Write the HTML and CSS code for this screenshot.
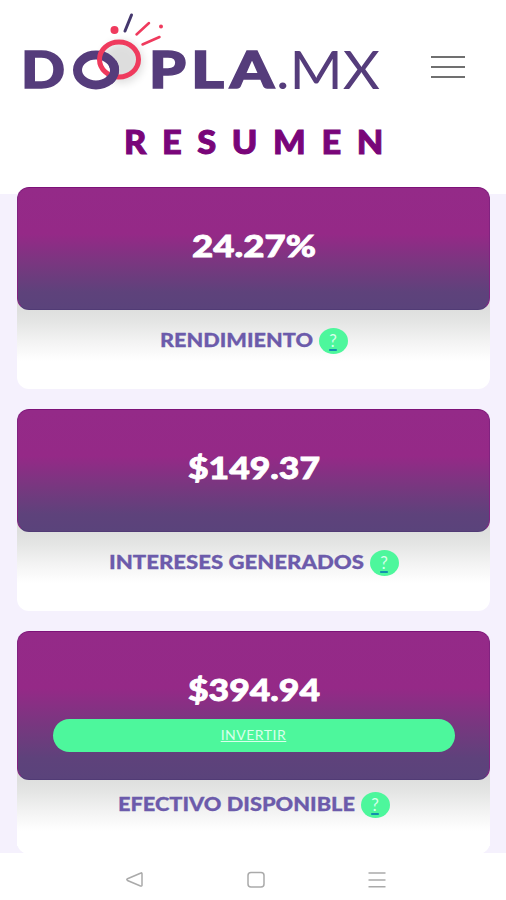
FILE: index.html
```
<!DOCTYPE html>
<html lang="es">
<head>
    <meta charset="UTF-8">
    <meta name="viewport" content="width=device-width, initial-scale=1.0">
    <title>DOOPLA.MX - Resumen</title>
    <link rel="stylesheet" href="styles.css">
</head>
<body>

    <!-- Header -->
    <header>
        <svg class="logo" width="390" height="110" viewBox="0 0 390 110" role="img" aria-label="DOOPLA.MX">
            <defs>
                <filter id="glow" x="-40%" y="-40%" width="180%" height="180%"><feGaussianBlur stdDeviation="4"/></filter>
            </defs>
            <g class="logo-bold">
                <text x="21" y="88" textLength="44" lengthAdjust="spacingAndGlyphs">D</text>
                <text x="149" y="88" textLength="37" lengthAdjust="spacingAndGlyphs">P</text>
                <text x="191" y="88" textLength="33" lengthAdjust="spacingAndGlyphs">L</text>
                <text x="230" y="88" textLength="44" lengthAdjust="spacingAndGlyphs">A</text>
            </g>
            <text class="logo-light" x="276" y="88.5" textLength="104" lengthAdjust="spacingAndGlyphs">.MX</text>
            <circle cx="122" cy="62" r="21" fill="#000" opacity=".13" filter="url(#glow)"/>
            <ellipse cx="96" cy="70" rx="18.500" ry="15" fill="#fff" stroke="#553c7b" stroke-width="9"/>
            <ellipse cx="119" cy="59.500" rx="19.500" ry="17.500" fill="none" stroke="#ef3a5d" stroke-width="5"/>
            <path d="M112.500 63A18.500 15 0 0 1 109 80.600" fill="none" stroke="#553c7b" stroke-width="9"/>
            <circle cx="114.500" cy="30" r="4" fill="#ef3a5d"/>
            <circle cx="161" cy="26.500" r="2" fill="#ef3a5d"/>
            <path d="M125 31L131.500 15" stroke="#44376d" stroke-width="3" stroke-linecap="round"/>
            <path d="M136.500 34.500L149 23M142.500 44.500L159.500 37" stroke="#ef3a5d" stroke-width="2.500" stroke-linecap="round"/>
        </svg>
        <button class="menu" aria-label="Menú"><span></span><span></span><span></span></button>
    </header>

    <!-- Summary -->
    <h1><svg width="258" height="36"><text x="0" y="30" textLength="275" lengthAdjust="spacingAndGlyphs">RESUMEN</text></svg></h1>

    <main>
        <section class="card">
            <div class="card-top">
                <svg class="amount" width="124" height="34"><text x="0" y="28" textLength="124" lengthAdjust="spacingAndGlyphs">24.27%</text></svg>
            </div>
            <div class="card-label">
                <svg class="label" width="153" height="24"><text x="0" y="19" textLength="153" lengthAdjust="spacingAndGlyphs">RENDIMIENTO</text></svg>
                <a class="help">?</a>
            </div>
        </section>

        <section class="card">
            <div class="card-top">
                <svg class="amount" width="132" height="34"><text x="0" y="28" textLength="132" lengthAdjust="spacingAndGlyphs">$149.37</text></svg>
            </div>
            <div class="card-label">
                <svg class="label" width="255" height="24"><text x="0" y="19" textLength="255" lengthAdjust="spacingAndGlyphs">INTERESES GENERADOS</text></svg>
                <a class="help">?</a>
            </div>
        </section>

        <section class="card card-cash">
            <div class="card-top">
                <svg class="amount" width="132" height="34"><text x="0" y="28" textLength="132" lengthAdjust="spacingAndGlyphs">$394.94</text></svg>
                <a class="invest">INVERTIR</a>
            </div>
            <div class="card-label">
                <svg class="label" width="237" height="24"><text x="0" y="19" textLength="237" lengthAdjust="spacingAndGlyphs">EFECTIVO DISPONIBLE</text></svg>
                <a class="help">?</a>
            </div>
        </section>
    </main>

    <!-- Phone navigation -->
    <nav>
        <svg width="20" height="20" viewBox="0 0 20 20"><path d="M16 3Q17 2.500 17 4V15Q17 16.500 15.500 16L2.500 10.500Q1 9.500 2.500 8.800Z"/></svg>
        <svg width="20" height="20" viewBox="0 0 20 20"><rect x="2" y="2.500" width="16" height="14.500" rx="3"/></svg>
        <svg width="20" height="20" viewBox="0 0 20 20"><path d="M1.500 3H18.500M1.500 10H18.500M1.500 16.800H18.500"/></svg>
    </nav>

</body>
</html>
```
FILE: styles.css
```
* {
    margin: 0;
    padding: 0;
    box-sizing: border-box;
}

body {
    height: 900px;
    display: flex;
    flex-direction: column;
    overflow: hidden;
    font-family: Lato, sans-serif;
    background-color: #f5f1fd;
}

/* Header */
header {
    height: 110px;
    display: flex;
    align-items: center;
    background-color: #fff;
}

.logo text {
    font-size: 51px;
    fill: #553c7b;
}

.logo-bold {
    font-weight: 900;
    stroke: #553c7b;
    stroke-width: 1.5px;
}

.logo .logo-light {
    font-size: 52px;
    font-weight: 400;
}

.menu {
    display: flex;
    flex-direction: column;
    gap: 8px;
    width: 34px;
    margin: 24px 0 0 41px;
    border: none;
    background: none;
}

.menu span {
    height: 2px;
    background-color: #707070;
}

h1 {
    height: 84px;
    padding-top: 14px;
    text-align: center;
    background-color: #fff;
}

h1 svg,
.amount,
.label {
    display: block;
    overflow: visible;
}

h1 svg {
    margin: 0 auto;
}

h1 text {
    font-size: 33px;
    font-weight: 900;
    letter-spacing: 15px;
    fill: #790579;
    stroke: #790579;
    stroke-width: 1px;
}

/* Cards */
main {
    height: 659px;
    flex: none;
    display: flex;
    flex-direction: column;
    gap: 20px;
    margin-top: -7px;
    padding: 0 16px 0 17px;
}

.card {
    height: 202px;
    flex: none;
    border-radius: 12px;
    background-color: #fff;
}

.card-top {
    position: relative;
    height: 123px;
    display: flex;
    flex-direction: column;
    align-items: center;
    padding-top: 41px;
    border: 1px solid #812280;
    border-color: #7d1278 #812280 #513b75;
    border-radius: 12px;
    background: linear-gradient(#942a88, #952987 38%, #76387f 65%, #5e427b 86%, #5a437b);
}

.amount text {
    font-size: 31px;
    font-weight: 900;
    fill: #fff;
    stroke: #fff;
    stroke-width: 0.8px;
}

.card-label {
    height: 78px;
    display: flex;
    justify-content: center;
    gap: 6px;
    margin-top: -12px;
    padding-top: 30px;
    background: linear-gradient(#dedfde 12px, #e5e6e5 25px, #f4f4f4 45px, #fff 63px);
}

.label text {
    font-size: 19.5px;
    font-weight: 900;
    fill: #6c5bab;
    stroke: #6c5bab;
    stroke-width: 0.3px;
}

.help {
    width: 29px;
    height: 26px;
    border-radius: 50%;
    background-color: #4df79c;
    color: #d8ffec;
    font-size: 17px;
    line-height: 26px;
    text-align: center;
    text-decoration: underline 2px #148fae;
    text-underline-offset: 2px;
}

.card-cash {
    height: 223px;
}

.card-cash .card-top {
    height: 149px;
}

.card-cash .card-label {
    padding-top: 24px;
}

.invest {
    width: 402px;
    height: 33px;
    margin-top: 12px;
    border-radius: 17px;
    background-color: #4df79c;
    color: #d9ffeb;
    font-size: 14px;
    letter-spacing: 0.5px;
    line-height: 31px;
    text-align: center;
    text-decoration: underline;
}

/* Phone navigation */
nav {
    position: relative;
    height: 47px;
    margin-top: auto;
    display: flex;
    justify-content: center;
    gap: 101px;
    padding: 17px 0 0 6px;
    background-color: #fff;
}

nav svg {
    fill: none;
    stroke: #aaa;
    stroke-width: 1.5;
}
```
